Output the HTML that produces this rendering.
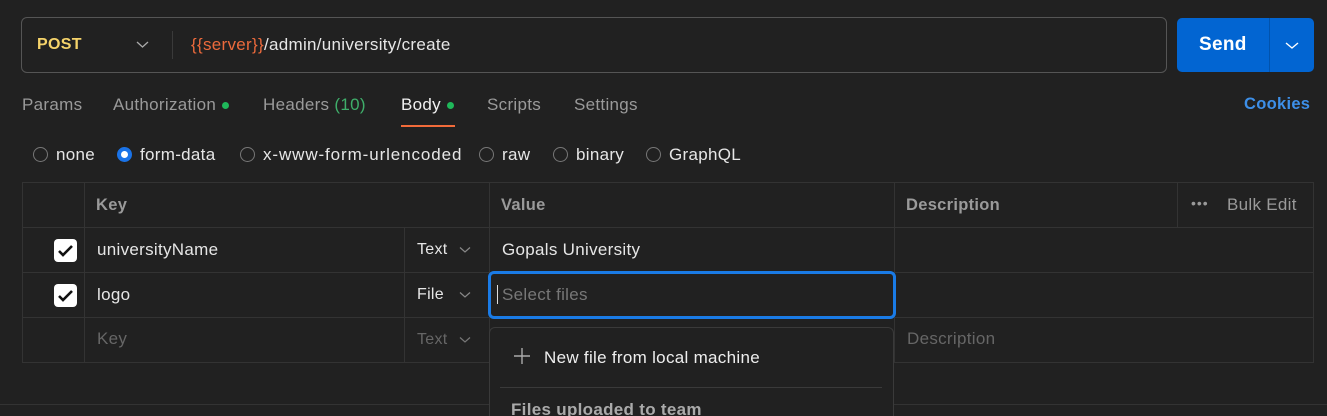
<!DOCTYPE html>
<html style="width:1327px;height:416px;overflow:hidden"><head><style>
*{box-sizing:border-box;margin:0;padding:0}
body{width:1327px;height:416px;background:#212121;font-family:"Liberation Sans",sans-serif;color:#e6e6e6;position:relative;overflow:hidden;font-size:17px;letter-spacing:0.3px}
.a{position:absolute;white-space:nowrap}
.l{position:absolute;background:#333}
.dot{display:inline-block;width:7px;height:7px;border-radius:50%;background:#1fb85a;margin-left:6px;vertical-align:middle}
.r{position:absolute;width:15px;height:15px;border:1px solid #777;border-radius:50%}
.cb{position:absolute;width:23px;height:23px;background:#fff;border-radius:4px}
</style></head><body>
<div class="a" style="left:21px;top:17px;width:1146px;height:56px;border:1px solid #555;border-radius:6px"></div>
<div class="a" style="left:37px;top:36px;color:#f5d36a;font-weight:bold;font-size:16px">POST</div>
<svg class="a" style="left:136px;top:40px" width="13" height="9"><path d="M1 2l5.5 5 5.5-5" stroke="#aaa" stroke-width="1.3" fill="none"/></svg>
<div class="l" style="left:172px;top:31px;width:1px;height:28px;background:#3a3a3a"></div>
<div class="a" style="left:191px;top:35px;font-size:17px"><span style="color:#ec6a3c">{{server}}</span>/admin/university/create</div>
<div class="a" style="left:1177px;top:18px;width:137px;height:54px;background:#0265d2;border-radius:5px"></div>
<div class="l" style="left:1269px;top:18px;width:1px;height:54px;background:#0153ad"></div>
<div class="a" style="left:1199px;top:34px;color:#fff;font-weight:bold;font-size:19px">Send</div>
<svg class="a" style="left:1285px;top:41px" width="14" height="9"><path d="M1 2l6 5 6-5" stroke="#fff" stroke-width="1.4" fill="none"/></svg>

<div class="a" style="left:22px;top:95px;color:#9a9a9a">Params</div>
<div class="a" style="left:113px;top:95px;color:#9a9a9a">Authorization<span class="dot"></span></div>
<div class="a" style="left:263px;top:95px;color:#9a9a9a">Headers <span style="color:#3fae6a">(10)</span></div>
<div class="a" style="left:401px;top:95px;color:#f0f0f0">Body<span class="dot"></span></div>
<div class="a" style="left:401px;top:125px;width:54px;height:2px;background:#f26b3a"></div>
<div class="a" style="left:487px;top:95px;color:#9a9a9a">Scripts</div>
<div class="a" style="left:574px;top:95px;color:#9a9a9a">Settings</div>
<div class="a" style="left:1244px;top:95px;color:#3d8fe8;font-weight:bold;font-size:16.5px">Cookies</div>

<div class="r" style="left:33px;top:147px"></div><div class="a" style="left:56px;top:145px">none</div>
<div class="r" style="left:117px;top:147px;border:4px solid #1a73e8;background:#fff"></div><div class="a" style="left:140px;top:145px">form-data</div>
<div class="r" style="left:240px;top:147px"></div><div class="a" style="left:263px;top:145px;letter-spacing:0.9px">x-www-form-urlencoded</div>
<div class="r" style="left:479px;top:147px"></div><div class="a" style="left:502px;top:145px">raw</div>
<div class="r" style="left:553px;top:147px"></div><div class="a" style="left:576px;top:145px">binary</div>
<div class="r" style="left:646px;top:147px"></div><div class="a" style="left:669px;top:145px">GraphQL</div>

<div class="a" style="left:22px;top:182px;width:1292px;height:181px;border:1px solid #333"></div>
<div class="l" style="left:22px;top:227px;width:1292px;height:1px"></div>
<div class="l" style="left:22px;top:272px;width:1292px;height:1px"></div>
<div class="l" style="left:22px;top:317px;width:1292px;height:1px"></div>
<div class="l" style="left:84px;top:182px;width:1px;height:181px"></div>
<div class="l" style="left:489px;top:182px;width:1px;height:181px"></div>
<div class="l" style="left:894px;top:182px;width:1px;height:181px"></div>
<div class="l" style="left:1177px;top:182px;width:1px;height:45px"></div>
<div class="l" style="left:404px;top:227px;width:1px;height:136px"></div>
<div class="l" style="left:0;top:404px;width:1327px;height:1px"></div>

<div class="a" style="left:96px;top:196px;color:#9a9a9a;font-weight:bold;font-size:16.5px">Key</div>
<div class="a" style="left:501px;top:196px;color:#9a9a9a;font-weight:bold;font-size:16.5px">Value</div>
<div class="a" style="left:906px;top:196px;color:#9a9a9a;font-weight:bold;font-size:16.5px">Description</div>
<div class="a" style="left:1191px;top:195px;color:#999;font-size:14px;letter-spacing:1px">•••</div>
<div class="a" style="left:1227px;top:195px;color:#9a9a9a">Bulk Edit</div>

<div class="cb" style="left:54px;top:239px"></div>
<svg class="a" style="left:57px;top:243px" width="17" height="15"><path d="M2 8l4 4 9-9" stroke="#111" stroke-width="2.6" fill="none"/></svg>
<div class="a" style="left:97px;top:240px">universityName</div>
<div class="a" style="left:417px;top:241px;font-size:16px">Text</div>
<svg class="a" style="left:459px;top:246px" width="12" height="8"><path d="M1 1.5l5 4.5 5-4.5" stroke="#888" stroke-width="1.2" fill="none"/></svg>
<div class="a" style="left:502px;top:240px">Gopals University</div>

<div class="cb" style="left:54px;top:284px"></div>
<svg class="a" style="left:57px;top:288px" width="17" height="15"><path d="M2 8l4 4 9-9" stroke="#111" stroke-width="2.6" fill="none"/></svg>
<div class="a" style="left:97px;top:285px">logo</div>
<div class="a" style="left:417px;top:286px;font-size:16px">File</div>
<svg class="a" style="left:459px;top:291px" width="12" height="8"><path d="M1 1.5l5 4.5 5-4.5" stroke="#888" stroke-width="1.2" fill="none"/></svg>

<div class="a" style="left:97px;top:329px;color:#666">Key</div>
<div class="a" style="left:417px;top:331px;font-size:16px;color:#666">Text</div>
<svg class="a" style="left:459px;top:336px" width="12" height="8"><path d="M1 1.5l5 4.5 5-4.5" stroke="#777" stroke-width="1.2" fill="none"/></svg>
<div class="a" style="left:907px;top:329px;color:#666">Description</div>

<div class="a" style="left:488px;top:271px;width:408px;height:48px;border:3px solid #1a7be6;border-radius:6px;background:#212121"></div>
<div class="a" style="left:497px;top:285px;width:1px;height:19px;background:#ddd"></div>
<div class="a" style="left:502px;top:285px;color:#777">Select files</div>

<div class="a" style="left:489px;top:327px;width:405px;height:100px;border:1px solid #3a3a3a;border-radius:6px;background:#212121"></div>
<svg class="a" style="left:513px;top:347px" width="18" height="18"><path d="M9 1v16M1 9h16" stroke="#aaa" stroke-width="1.4"/></svg>
<div class="a" style="left:544px;top:348px;color:#eee">New file from local machine</div>
<div class="l" style="left:500px;top:387px;width:382px;height:1px;background:#3a3a3a"></div>
<div class="a" style="left:511px;top:400px;color:#aaa;font-weight:bold">Files uploaded to team</div>
</body></html>
